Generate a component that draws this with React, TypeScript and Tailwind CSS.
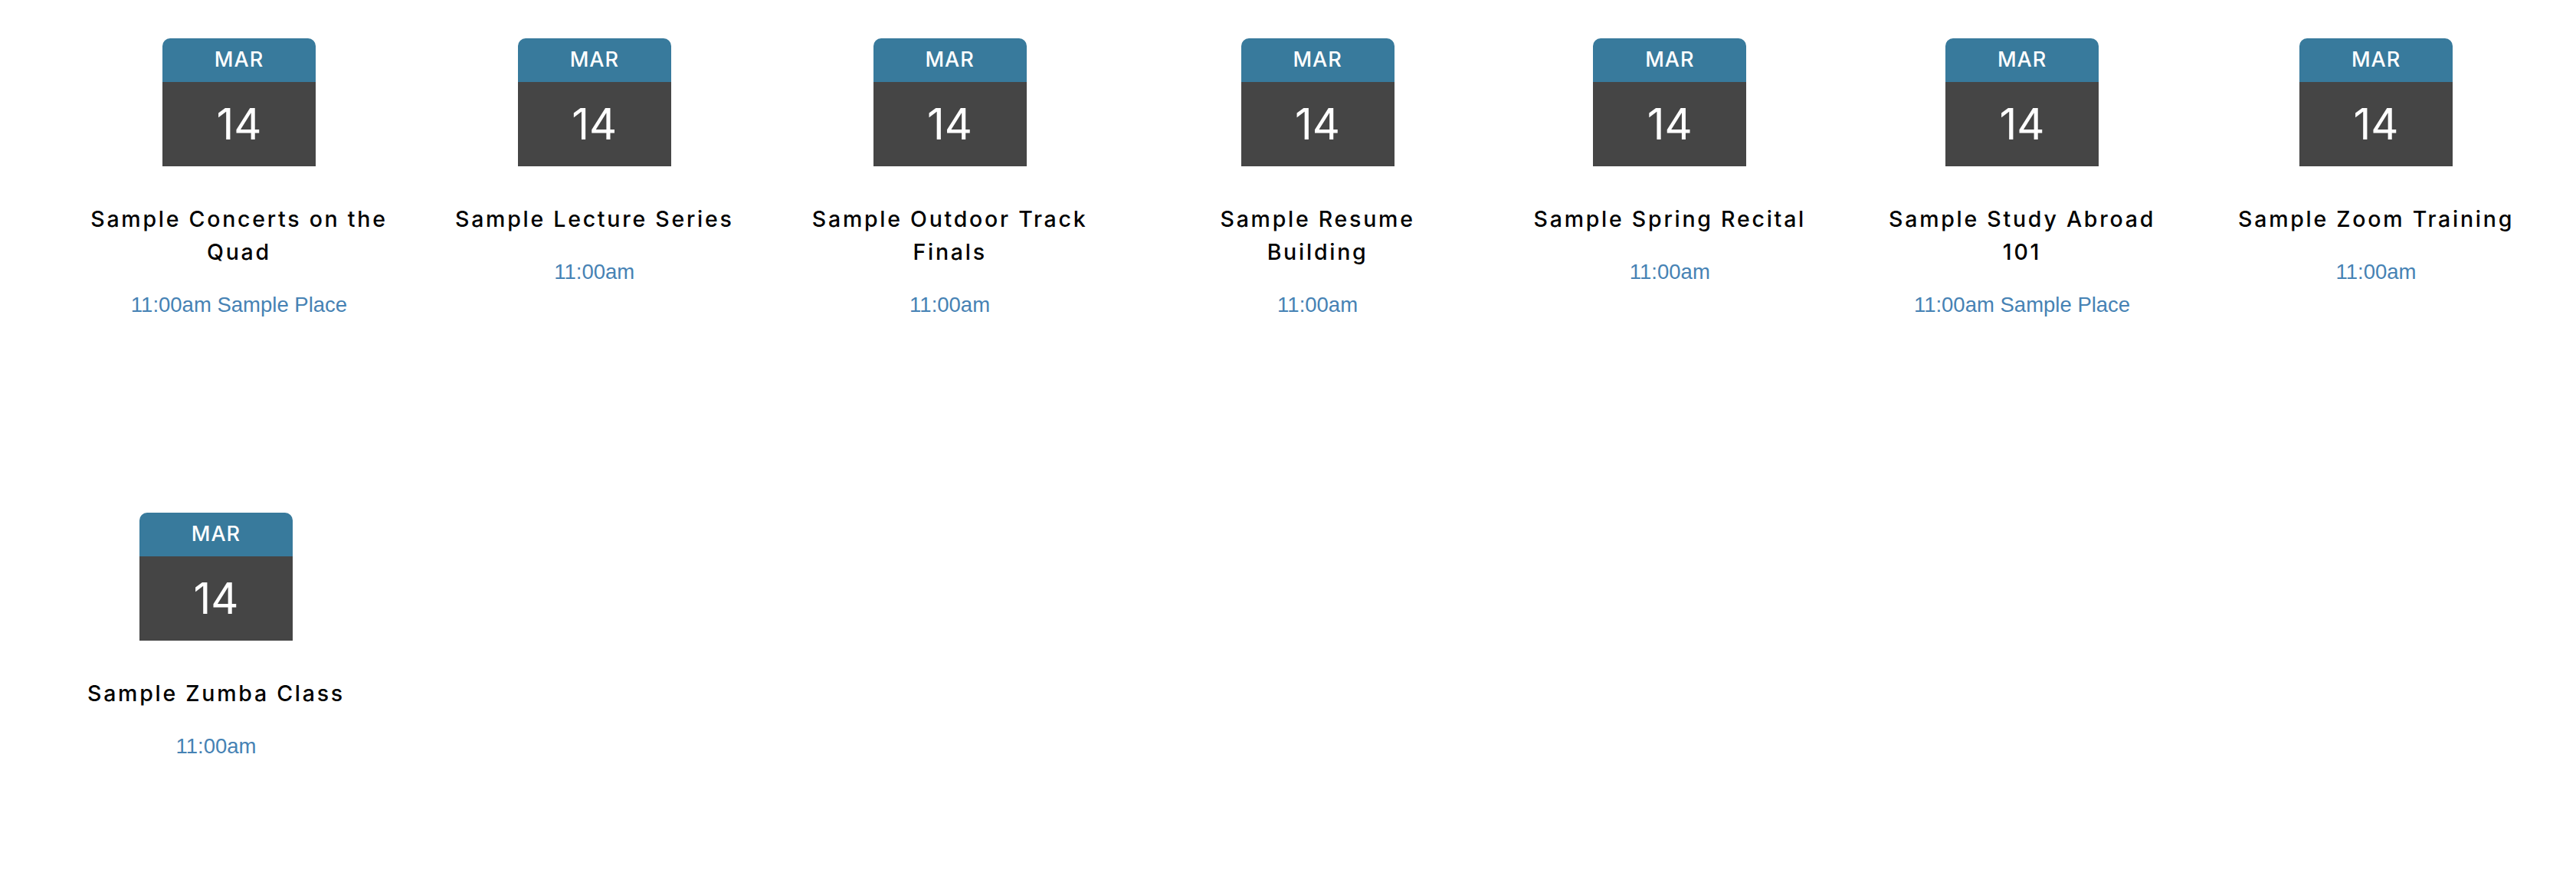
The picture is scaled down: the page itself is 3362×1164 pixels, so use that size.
type Event = {
  title: string[];
  time: string;
};

const events: Event[] = [
  { title: ["Sample Concerts on the", "Quad"], time: "11:00am Sample Place" },
  { title: ["Sample Lecture Series"], time: "11:00am" },
  { title: ["Sample Outdoor Track", "Finals"], time: "11:00am" },
  { title: ["Sample Resume", "Building"], time: "11:00am" },
  { title: ["Sample Spring Recital"], time: "11:00am" },
  { title: ["Sample Study Abroad", "101"], time: "11:00am Sample Place" },
  { title: ["Sample Zoom Training"], time: "11:00am" },
  { title: ["Sample Zumba Class"], time: "11:00am" },
];

function DateBadge() {
  return (
    <div className="w-[200px] font-['Inter',sans-serif] text-white">
      <div className="flex h-[57px] items-center justify-center rounded-t-[10px] bg-[#387a9c] text-[27px] font-medium tracking-[1px]">
        MAR
      </div>
      <div className="flex h-[110px] items-center justify-center bg-[#454545] text-[56px]">
        14
      </div>
    </div>
  );
}

function EventCard({ event }: { event: Event }) {
  const wrapped = event.title.length > 1;
  return (
    <div
      className={
        wrapped
          ? "flex w-[396px] flex-col items-center"
          : "flex flex-col items-center whitespace-nowrap"
      }
    >
      <DateBadge />
      <h3 className="mt-[47px] text-center font-['Inter',sans-serif] text-[28.5px] font-medium leading-[43px] tracking-[2.75px] text-black">
        {event.title.map((line) => (
          <span key={line} className="block whitespace-nowrap">
            {line}
          </span>
        ))}
      </h3>
      <p className="mt-[32px] text-center font-['Liberation_Sans',Arial,sans-serif] text-[27.5px] leading-[32px] text-[#4682b4]">
        {event.time}
      </p>
    </div>
  );
}

export default function App() {
  return (
    <div className="min-h-screen bg-white">
      <div className="flex flex-wrap items-start gap-x-[84px] gap-y-[255px] pl-[114px] pt-[50px]">
        {events.map((e) => (
          <EventCard key={e.title.join(" ")} event={e} />
        ))}
      </div>
    </div>
  );
}
